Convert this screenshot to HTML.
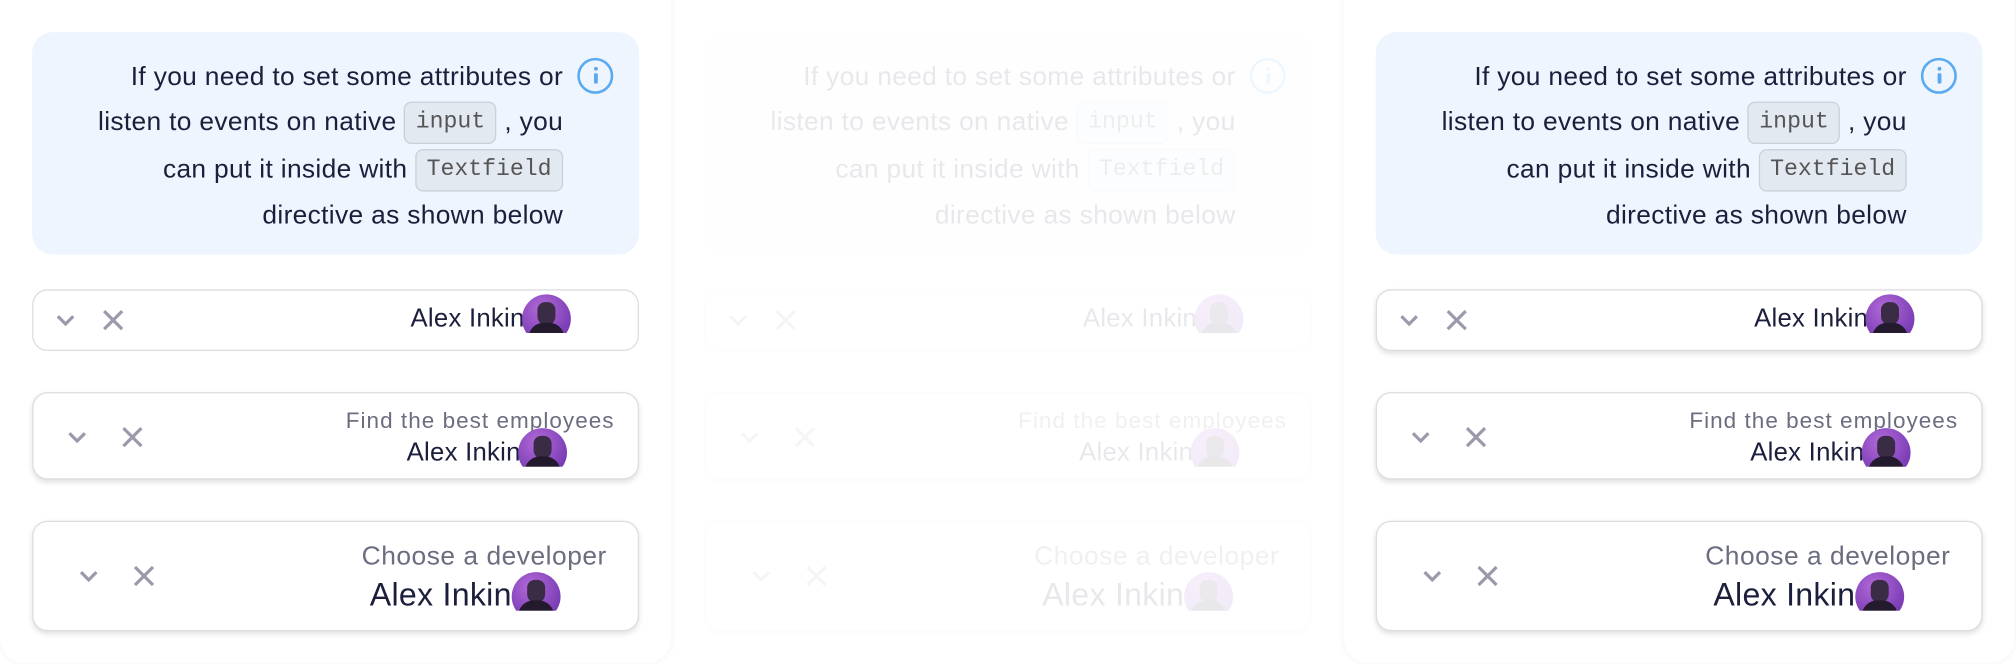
<!DOCTYPE html>
<html><head><meta charset="utf-8"><style>
html,body{margin:0;padding:0;width:2016px;height:664px;overflow:hidden;background:#fff;font-family:"Liberation Sans",sans-serif;}
#w{position:absolute;left:0;top:0;width:1568px;height:516px;transform:scale(1.285714);transform-origin:0 0;}
.panel{position:absolute;top:-20px;width:522px;height:536px;background:#fff;border-radius:0 0 20px 20px;box-shadow:0 0 6px rgba(0,0,0,0.06);}
.info{position:absolute;left:25px;top:45px;width:472px;height:173px;background:#eef5fe;border-radius:16px;}
.txt{position:absolute;right:59px;top:18px;width:420px;text-align:right;font-size:20.5px;color:#1b1f3b;line-height:34px;letter-spacing:0.25px;}
.code{display:inline-block;font-family:"Liberation Mono",monospace;font-size:18px;color:#555;background:#e3e9f1;border:1px solid #c9d0da;border-radius:6px;padding:0 8px;line-height:31px;vertical-align:middle;margin:2px 0;letter-spacing:0;}
.icon{position:absolute;left:424px;top:20px;width:24px;height:24px;border:2.5px solid #5aaaf2;border-radius:50%;}
.icon:before{content:"";position:absolute;left:10.5px;top:10px;width:3px;height:8px;background:#5aaaf2;border-radius:1px;}
.icon:after{content:"";position:absolute;left:10.5px;top:5px;width:3px;height:3px;background:#5aaaf2;border-radius:50%;}
.f{position:absolute;left:25px;width:470px;background:#fff;border:1px solid #dcdde2;border-radius:12px;}
.sh{box-shadow:0 2px 4px rgba(0,0,0,0.12);}
.chev,.x{position:absolute;}
.name{position:absolute;color:#1b1f3b;white-space:nowrap;letter-spacing:0.2px;}
.lbl{position:absolute;color:#6b6d80;white-space:nowrap;}
.av{position:absolute;width:38px;height:38px;border-radius:50%;overflow:hidden;background:radial-gradient(circle at 40% 30%,#b36ad8,#7a3db5 70%);}
.av:before{content:"";position:absolute;left:12px;top:6px;width:14px;height:18px;background:#3a2c45;border-radius:6px 6px 7px 7px;}
.av:after{content:"";position:absolute;left:5px;top:22px;width:28px;height:14px;background:#241a2e;border-radius:12px 12px 0 0;}
.cut{position:absolute;width:40px;height:12px;background:#fff;}
</style></head><body><div id="w">
<div class="panel" style="left:0;">
 <div class="info"><div class="txt">If you need to set some attributes or<br>listen to events on native <span class="code">input</span> , you<br>can put it inside with <span class="code">Textfield</span><br>directive as shown below</div><div class="icon"></div></div>
 <div class="f" style="top:245px;height:46px;">
  <svg class="chev" style="left:16px;top:17px" width="18" height="12"><path d="M3 3l6 6 6-6" stroke="#9a9aaa" stroke-width="2.5" fill="none"/></svg>
  <svg class="x" style="left:53px;top:14px" width="18" height="18"><path d="M2 2l14 14M16 2L2 16" stroke="#9a9aaa" stroke-width="2.5"/></svg>
  <div class="name" style="right:88px;top:11px;font-size:20px;">Alex Inkin</div>
  <div class="av" style="left:380px;top:3px"></div><div class="cut" style="left:379px;top:33px"></div>
 </div>
 <div class="f sh" style="top:325px;height:66px;">
  <svg class="chev" style="left:25px;top:28px" width="18" height="12"><path d="M3 3l6 6 6-6" stroke="#9a9aaa" stroke-width="2.5" fill="none"/></svg>
  <svg class="x" style="left:68px;top:25px" width="18" height="18"><path d="M2 2l14 14M16 2L2 16" stroke="#9a9aaa" stroke-width="2.5"/></svg>
  <div class="lbl" style="right:18px;top:11px;font-size:17.5px;letter-spacing:0.8px;">Find the best employees</div>
  <div class="name" style="right:91px;top:35px;font-size:20px;">Alex Inkin</div>
  <div class="av" style="left:377px;top:27px"></div><div class="cut" style="left:376px;top:57px;height:8px"></div>
 </div>
 <div class="f sh" style="top:425px;height:84px;">
  <svg class="chev" style="left:34px;top:36px" width="18" height="12"><path d="M3 3l6 6 6-6" stroke="#9a9aaa" stroke-width="2.5" fill="none"/></svg>
  <svg class="x" style="left:77px;top:33px" width="18" height="18"><path d="M2 2l14 14M16 2L2 16" stroke="#9a9aaa" stroke-width="2.5"/></svg>
  <div class="lbl" style="right:24px;top:15px;font-size:20.5px;letter-spacing:0.4px;">Choose a developer</div>
  <div class="name" style="right:98px;top:43px;font-size:25px;">Alex Inkin</div>
  <div class="av" style="left:372px;top:39px"></div><div class="cut" style="left:371px;top:69px"></div>
 </div>
</div>
<div class="panel" style="left:523px;opacity:0.1;">
 <div class="info"><div class="txt">If you need to set some attributes or<br>listen to events on native <span class="code">input</span> , you<br>can put it inside with <span class="code">Textfield</span><br>directive as shown below</div><div class="icon"></div></div>
 <div class="f" style="top:245px;height:46px;">
  <svg class="chev" style="left:16px;top:17px" width="18" height="12"><path d="M3 3l6 6 6-6" stroke="#9a9aaa" stroke-width="2.5" fill="none"/></svg>
  <svg class="x" style="left:53px;top:14px" width="18" height="18"><path d="M2 2l14 14M16 2L2 16" stroke="#9a9aaa" stroke-width="2.5"/></svg>
  <div class="name" style="right:88px;top:11px;font-size:20px;">Alex Inkin</div>
  <div class="av" style="left:380px;top:3px"></div><div class="cut" style="left:379px;top:33px"></div>
 </div>
 <div class="f sh" style="top:325px;height:66px;">
  <svg class="chev" style="left:25px;top:28px" width="18" height="12"><path d="M3 3l6 6 6-6" stroke="#9a9aaa" stroke-width="2.5" fill="none"/></svg>
  <svg class="x" style="left:68px;top:25px" width="18" height="18"><path d="M2 2l14 14M16 2L2 16" stroke="#9a9aaa" stroke-width="2.5"/></svg>
  <div class="lbl" style="right:18px;top:11px;font-size:17.5px;letter-spacing:0.8px;">Find the best employees</div>
  <div class="name" style="right:91px;top:35px;font-size:20px;">Alex Inkin</div>
  <div class="av" style="left:377px;top:27px"></div><div class="cut" style="left:376px;top:57px;height:8px"></div>
 </div>
 <div class="f sh" style="top:425px;height:84px;">
  <svg class="chev" style="left:34px;top:36px" width="18" height="12"><path d="M3 3l6 6 6-6" stroke="#9a9aaa" stroke-width="2.5" fill="none"/></svg>
  <svg class="x" style="left:77px;top:33px" width="18" height="18"><path d="M2 2l14 14M16 2L2 16" stroke="#9a9aaa" stroke-width="2.5"/></svg>
  <div class="lbl" style="right:24px;top:15px;font-size:20.5px;letter-spacing:0.4px;">Choose a developer</div>
  <div class="name" style="right:98px;top:43px;font-size:25px;">Alex Inkin</div>
  <div class="av" style="left:372px;top:39px"></div><div class="cut" style="left:371px;top:69px"></div>
 </div>
</div>
<div class="panel" style="left:1045px;">
 <div class="info"><div class="txt">If you need to set some attributes or<br>listen to events on native <span class="code">input</span> , you<br>can put it inside with <span class="code">Textfield</span><br>directive as shown below</div><div class="icon"></div></div>
 <div class="f sh" style="top:245px;height:46px;">
  <svg class="chev" style="left:16px;top:17px" width="18" height="12"><path d="M3 3l6 6 6-6" stroke="#9a9aaa" stroke-width="2.5" fill="none"/></svg>
  <svg class="x" style="left:53px;top:14px" width="18" height="18"><path d="M2 2l14 14M16 2L2 16" stroke="#9a9aaa" stroke-width="2.5"/></svg>
  <div class="name" style="right:88px;top:11px;font-size:20px;">Alex Inkin</div>
  <div class="av" style="left:380px;top:3px"></div><div class="cut" style="left:379px;top:33px"></div>
 </div>
 <div class="f sh" style="top:325px;height:66px;">
  <svg class="chev" style="left:25px;top:28px" width="18" height="12"><path d="M3 3l6 6 6-6" stroke="#9a9aaa" stroke-width="2.5" fill="none"/></svg>
  <svg class="x" style="left:68px;top:25px" width="18" height="18"><path d="M2 2l14 14M16 2L2 16" stroke="#9a9aaa" stroke-width="2.5"/></svg>
  <div class="lbl" style="right:18px;top:11px;font-size:17.5px;letter-spacing:0.8px;">Find the best employees</div>
  <div class="name" style="right:91px;top:35px;font-size:20px;">Alex Inkin</div>
  <div class="av" style="left:377px;top:27px"></div><div class="cut" style="left:376px;top:57px;height:8px"></div>
 </div>
 <div class="f sh" style="top:425px;height:84px;">
  <svg class="chev" style="left:34px;top:36px" width="18" height="12"><path d="M3 3l6 6 6-6" stroke="#9a9aaa" stroke-width="2.5" fill="none"/></svg>
  <svg class="x" style="left:77px;top:33px" width="18" height="18"><path d="M2 2l14 14M16 2L2 16" stroke="#9a9aaa" stroke-width="2.5"/></svg>
  <div class="lbl" style="right:24px;top:15px;font-size:20.5px;letter-spacing:0.4px;">Choose a developer</div>
  <div class="name" style="right:98px;top:43px;font-size:25px;">Alex Inkin</div>
  <div class="av" style="left:372px;top:39px"></div><div class="cut" style="left:371px;top:69px"></div>
 </div>
</div>
</div></body></html>
